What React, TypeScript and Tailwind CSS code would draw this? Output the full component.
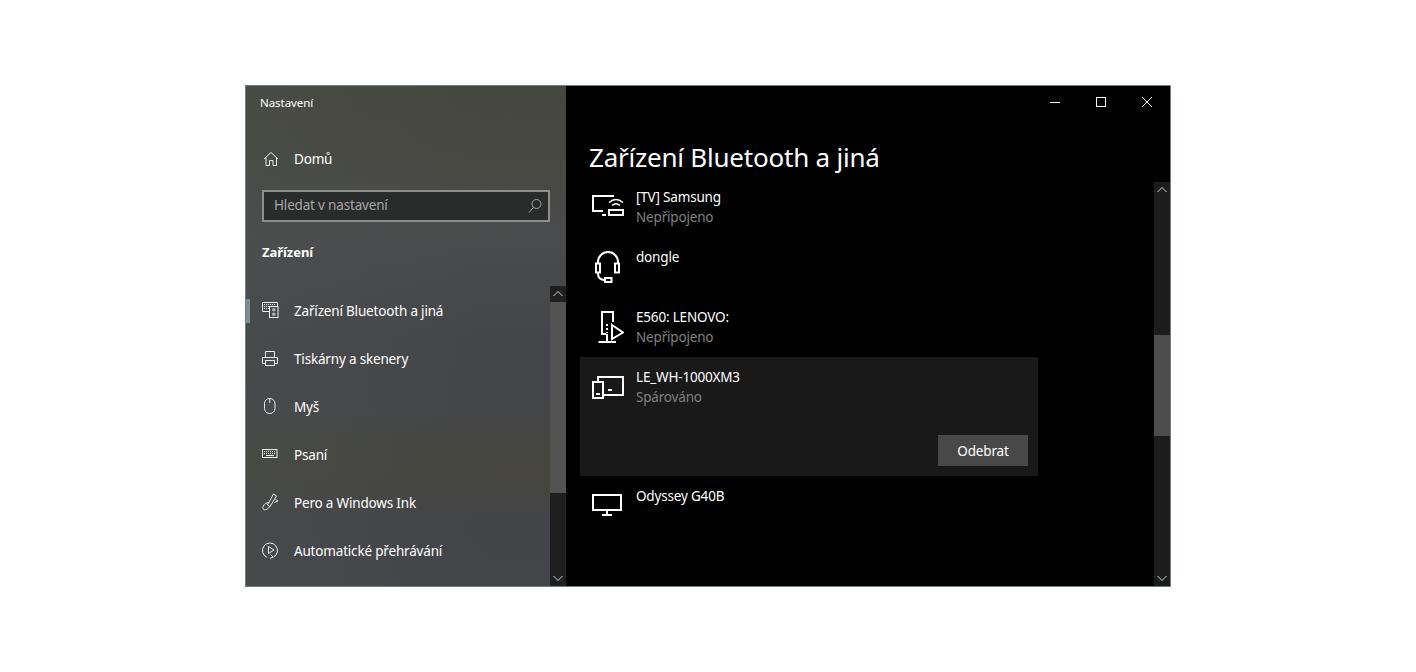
import React from "react";

const S = { fill: "none", stroke: "currentColor", strokeWidth: 1 } as const;
const B = { fill: "none", stroke: "currentColor", strokeWidth: 2 } as const;

const Up = () => (
  <svg width="16" height="16" viewBox="0 0 16 16" className="text-[#d8d8d8]" {...S}><path d="M3.5 10 L8 5.5 L12.5 10" /></svg>
);
const Down = () => (
  <svg width="16" height="16" viewBox="0 0 16 16" className="text-[#d8d8d8]" {...S}><path d="M3.5 6 L8 10.5 L12.5 6" /></svg>
);

const icons: Record<string, React.ReactNode> = {
  bt: (
    <>
      <path d="M7.5 10.5 H0.5 V1.5 H15.5 V5.5" />
      <path d="M2 3.5 h12 M2 5.5 h5 M2 7.5 h5" strokeDasharray="1 1" />
      <rect x="7.5" y="5.5" width="8.5" height="11" />
      <circle cx="11.75" cy="8.75" r="1.75" fill="currentColor" stroke="none" opacity=".65" />
      <circle cx="11.75" cy="13.25" r="1.75" fill="currentColor" stroke="none" opacity=".65" />
    </>
  ),
  printer: (
    <>
      <path d="M3.5 8 V2.5 H12.5 V8" />
      <path d="M3.5 14.5 H0.5 V8.5 H15.5 V14.5 H12.5" />
      <rect x="3.5" y="11.5" width="9" height="5" />
    </>
  ),
  mouse: (
    <>
      <rect x="2.5" y="1.5" width="10.5" height="15" rx="5" />
      <path d="M7.75 1.5 V6" />
    </>
  ),
  keyboard: (
    <>
      <rect x="0.5" y="4.5" width="14.5" height="8" />
      <path d="M2 6.5 h11.5 M2 8.5 h11.5" strokeDasharray="1 1" />
      <path d="M4 10.5 h8" />
    </>
  ),
  pen: (
    <>
      <path d="M11.5 1 L14.5 3 L8 13.5 L5.5 12 Z" />
      <path d="M13.5 6.5 L16 8 L12.5 9.5" />
      <path d="M6.5 9.5 C2.5 10 0.5 13 1 15.5 C1.5 17.5 5 17 6.5 15 L8 13.5" />
    </>
  ),
  autoplay: (
    <>
      <path d="M5 16.37 A7.5 7.5 0 1 1 11.5 16.1" />
      <path d="M6.5 5.5 L12 9 L6.5 12.5 Z" />
      <path d="M8.5 13.5 L11 16 L8 17.5" />
    </>
  ),
};

function SideItem({ icon, label, active }: { icon: string; label: string; active?: boolean }) {
  return (
    <div className="relative flex h-12 items-center pl-4 text-[13.5px] tracking-[-0.18px] text-white">
      {active && <div className="absolute left-0 top-3 h-6 w-1 bg-[#7b8e94]" />}
      <svg width="20" height="20" viewBox="0 0 20 20" className="mr-3 shrink-0 text-[#ececec]" {...S}>
        {icons[icon]}
      </svg>
      <span>{label}</span>
    </div>
  );
}

const rowIcons: Record<string, React.ReactNode> = {
  tv: (
    <>
      <path d="M22 8 H1 V23 H11" />
      <path d="M10 27 h4" />
      <rect x="17" y="22" width="14" height="5" />
      <path d="M17 14.5 Q24 8.5 31 14.5" strokeWidth="1.5" />
      <path d="M20 17.5 Q24 14 28 17.5" strokeWidth="1.5" />
    </>
  ),
  headset: (
    <>
      <path d="M6 15 V14 A10 10 0 0 1 26 14 V15" />
      <rect x="4" y="15.5" width="4" height="9" />
      <rect x="23" y="15.5" width="4" height="9" />
      <path d="M6 24.5 V26 A6 6 0 0 0 12 32" />
      <rect x="13" y="30" width="6.5" height="4" />
    </>
  ),
  media: (
    <>
      <path d="M21 14 V4 H10 V26 H14" />
      <path d="M15 16 V25" strokeDasharray="2 2" />
      <path d="M20 17 L31 24.5 L20 31 Z" />
      <path d="M15 26 V34 M6.5 34 H24" />
    </>
  ),
  pair: (
    <>
      <path d="M6 13 V9 H31 V27 H12" />
      <rect x="1" y="14" width="10" height="16" />
      <path d="M4 26 h4 M16 22 h4" />
    </>
  ),
  monitor: (
    <>
      <rect x="1" y="8" width="28" height="15" />
      <path d="M15 23 V28 M10 28 H20" />
    </>
  ),
};

function Row({
  icon,
  name,
  sub,
  h,
  children,
  selected,
}: {
  icon: string;
  name: string;
  sub?: string;
  h: string;
  children?: React.ReactNode;
  selected?: boolean;
}) {
  return (
    <div className={`${h} ${selected ? "bg-[#191919]" : ""} relative flex w-[458px] shrink-0 items-start gap-3 pl-3`}>
      <svg width="32" height="40" viewBox="0 0 32 40" className="mt-[11px] shrink-0 text-white" {...B}>
        {rowIcons[icon]}
      </svg>
      <div className="pt-[10px] text-[13.5px] leading-5 tracking-[-0.18px]">
        <div className="text-white">{name}</div>
        {sub && <div className="text-[#808080]">{sub}</div>}
      </div>
      {children}
    </div>
  );
}

export default function App() {
  return (
    <div className="h-[672px] w-[1416px] overflow-hidden bg-white pl-[245px] pt-[85px] font-['Noto_Sans',sans-serif]">
      <div className="flex h-[502px] w-[926px] border border-[#6f8087] bg-black">
        <aside className="flex h-full w-[320px] shrink-0 flex-col bg-[linear-gradient(90deg,#4c505066_0%,#4c505000_75%),linear-gradient(180deg,#46473c_0%,#47483f_12%,#4a4b4c_30%,#454649_50%,#44464a_62%,#46463e_76%,#434448_88%,#444548_100%)] text-white">
          <div className="flex h-8 shrink-0 items-center pl-[14px] pt-[2px] text-[11.5px] tracking-[-0.05px]">Nastavení</div>
          <div className="mt-[17px] flex h-12 shrink-0 items-center pl-4 text-[13.5px] tracking-[-0.18px]">
            <svg width="20" height="20" viewBox="0 0 20 20" className="mr-3 shrink-0 text-[#ececec]" {...S}>
              <path d="M2 10 L9 3.5 L16 10" />
              <path d="M4 8.5 V16.5 H7.5 V11.5 H11 V16.5 H14.5 V8.5" />
            </svg>
            <span>Domů</span>
          </div>
          <div className="mx-4 mt-[7px] flex h-8 shrink-0 items-center justify-between border-2 border-[#8e8e8e] bg-[#2a2b2b] pl-[10px] pr-[6px] text-[13.5px] tracking-[-0.18px] text-[#a6a6a6]">
            <span className="pb-[2px]">Hledat v nastavení</span>
            <svg width="14" height="16" viewBox="0 0 14 16" className="text-[#a6a6a6]" {...S}>
              <circle cx="8.5" cy="6" r="4.5" />
              <path d="M5.5 9.5 L1 14.5" />
            </svg>
          </div>
          <div className="mt-[20px] pl-4 text-[13px] font-bold leading-5 tracking-[-0.05px]">Zařízení</div>
          <div className="mt-[24px] flex min-h-0 flex-1">
            <div className="min-w-0 flex-1 pt-[1px]">
              <SideItem icon="bt" label="Zařízení Bluetooth a jiná" active />
              <SideItem icon="printer" label="Tiskárny a skenery" />
              <SideItem icon="mouse" label="Myš" />
              <SideItem icon="keyboard" label="Psaní" />
              <SideItem icon="pen" label="Pero a Windows Ink" />
              <SideItem icon="autoplay" label="Automatické přehrávání" />
            </div>
            <div className="flex h-full w-4 shrink-0 flex-col bg-[#1f1f1f]">
              <Up />
              <div className="h-[191px] bg-[#535353]" />
              <div className="flex-1" />
              <Down />
            </div>
          </div>
        </aside>
        <main className="flex min-w-0 flex-1 flex-col">
          <div className="flex h-8 shrink-0 justify-end">
            <button className="flex h-8 w-[46px] items-center justify-center text-white">
              <svg width="12" height="12" viewBox="0 0 12 12" {...S}><path d="M1 6.5 H11" /></svg>
            </button>
            <button className="flex h-8 w-[46px] items-center justify-center text-white">
              <svg width="12" height="12" viewBox="0 0 12 12" {...S}><rect x="1.5" y="1.5" width="9" height="9" /></svg>
            </button>
            <button className="flex h-8 w-[46px] items-center justify-center text-white">
              <svg width="12" height="12" viewBox="0 0 12 12" {...S}><path d="M1 1 L11 11 M11 1 L1 11" /></svg>
            </button>
          </div>
          <h1 className="ml-[23px] mt-[19px] h-[45px] text-[26px] leading-[40px] tracking-[-0.22px] text-white">Zařízení Bluetooth a jiná</h1>
          <div className="flex min-h-0 flex-1">
            <div className="min-w-0 flex-1 overflow-hidden pl-[14px]">
              <div className="-mt-[5px] flex flex-col">
                <Row icon="tv" name="[TV] Samsung" sub="Nepřipojeno" h="h-[60px]" />
                <Row icon="headset" name="dongle" h="h-[60px]" />
                <Row icon="media" name="E560: LENOVO:" sub="Nepřipojeno" h="h-[60px]" />
                <Row icon="pair" name="LE_WH-1000XM3" sub="Spárováno" h="h-[119px]" selected>
                  <button className="absolute bottom-[10px] right-[10px] h-[31px] w-[90px] bg-[#484848] pt-[2px] text-[13.5px] tracking-[-0.18px] text-white">Odebrat</button>
                </Row>
                <Row icon="monitor" name="Odyssey G40B" h="h-[60px]" />
              </div>
            </div>
            <div className="flex h-full w-4 shrink-0 flex-col bg-[#1c1c1c]">
              <Up />
              <div className="mt-[137px] h-[101px] bg-[#4d4d4d]" />
              <div className="flex-1" />
              <Down />
            </div>
          </div>
        </main>
      </div>
    </div>
  );
}
